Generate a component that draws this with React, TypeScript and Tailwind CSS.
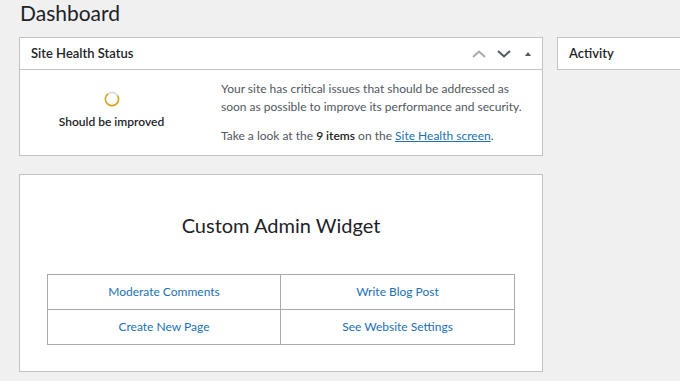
import React from "react";

const font = { fontFamily: 'Lato, "Noto Sans", sans-serif' };

function HealthRing() {
  return (
    <svg width="16" height="16" viewBox="0 0 16 16">
      <circle cx="8" cy="8" r="6.6" fill="none" stroke="#dcdcde" strokeWidth="1.6" />
      <circle
        cx="8"
        cy="8"
        r="6.6"
        fill="none"
        stroke="#dba617"
        strokeWidth="1.6"
        strokeDasharray="30 42"
        transform="rotate(-30 8 8)"
      />
    </svg>
  );
}

export default function App() {
  return (
    <div className="w-[680px] h-[381px] overflow-hidden bg-[#f0f0f1] text-[#1d2327]" style={font}>
      <h1 className="pl-[20px] pt-[1px] h-[37px] text-[21px] leading-[24px] font-normal text-[#1d2327]">Dashboard</h1>
      <div className="flex gap-[14px] pl-[19px]">
        <div className="w-[524px] shrink-0 flex flex-col gap-[18px]">
          <div className="bg-white border border-[#c3c4c7]">
            <div className="h-[32px] flex items-center justify-between border-b border-[#c3c4c7] pl-[11px] pr-[8px]">
              <span className="text-[13px] font-semibold">Site Health Status</span>
              <div className="flex items-center gap-[11px]">
                <svg width="14" height="8" viewBox="0 0 14 8"><path d="M1 7 L7 1.5 L13 7" fill="none" stroke="#a7aaad" strokeWidth="2" /></svg>
                <svg width="14" height="8" viewBox="0 0 14 8"><path d="M1 1 L7 6.5 L13 1" fill="none" stroke="#50575e" strokeWidth="2" /></svg>
                <svg width="12" height="8" viewBox="0 0 12 8"><path d="M3 6 L6 2 L9 6 Z" fill="#50575e" /></svg>
              </div>
            </div>
            <div className="flex h-[85px]">
              <div className="w-[183px] shrink-0 flex flex-col items-center pt-[21px]">
                <HealthRing />
                <span className="mt-[6px] text-[12px] font-semibold leading-[18px]">Should be improved</span>
              </div>
              <div className="pl-[18px] pt-[10px] text-[12px] leading-[18px] text-[#50575e] whitespace-nowrap">
                <p>Your site has critical issues that should be addressed as<br />soon as possible to improve its performance and security.</p>
                <p className="mt-[11px]">
                  Take a look at the <b className="font-semibold text-[#1d2327]">9 items</b> on the{" "}
                  <a className="text-[#2271b1] underline">Site Health screen</a>.
                </p>
              </div>
            </div>
          </div>
          <div className="bg-white border border-[#c3c4c7] h-[198px] flex flex-col items-center">
            <div className="mt-[36px] text-[20px] leading-[28px] text-[#1d2327]">Custom Admin Widget</div>
            <div className="mt-[35px] w-[468px] grid grid-cols-2 border border-[#a7aaad] text-[12px] text-[#2271b1]">
              <div className="h-[35px] flex items-center justify-center border-r border-b border-[#a7aaad]">Moderate Comments</div>
              <div className="h-[35px] flex items-center justify-center border-b border-[#a7aaad]">Write Blog Post</div>
              <div className="h-[34px] flex items-center justify-center border-r border-[#a7aaad]">Create New Page</div>
              <div className="h-[34px] flex items-center justify-center">See Website Settings</div>
            </div>
          </div>
        </div>
        <div className="flex-1">
          <div className="bg-white border border-[#c3c4c7] border-r-0 h-[33px] flex items-center pl-[11px]">
            <span className="text-[13px] font-semibold">Activity</span>
          </div>
        </div>
      </div>
    </div>
  );
}
